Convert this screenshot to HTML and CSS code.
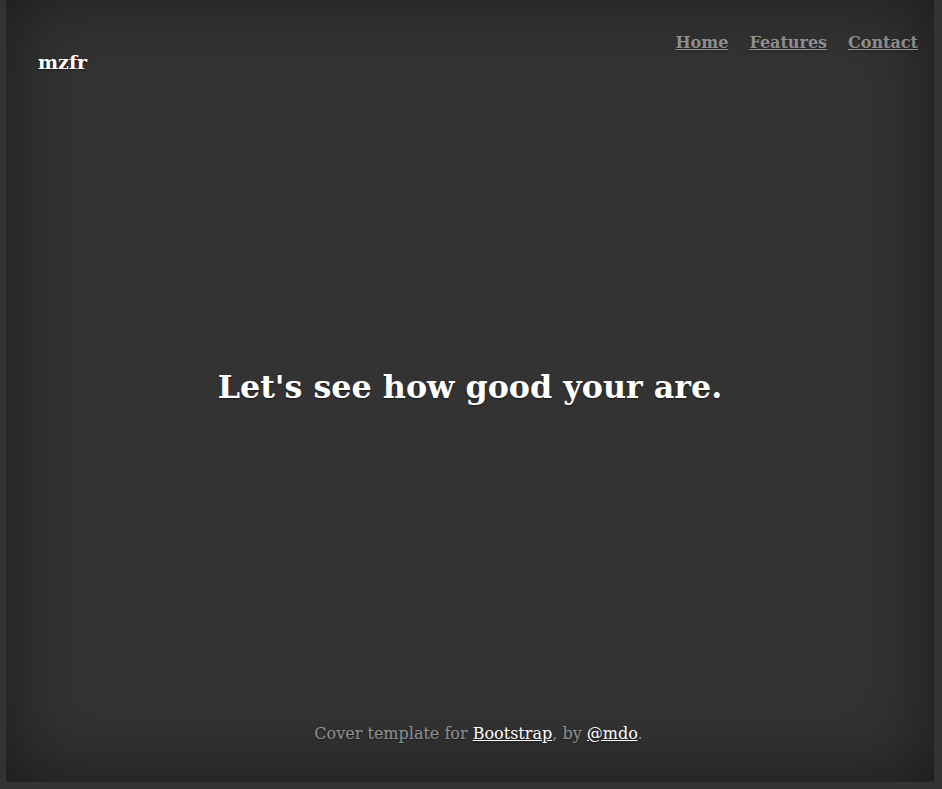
FILE: index.html
```html
<!DOCTYPE html>
<html lang="en">
<head>
<meta charset="utf-8">
<title>mzfr</title>
<link rel="stylesheet" href="styles.css">
</head>
<body>
<div class="cover">
  <header class="masthead">
    <h3 class="brand">mzfr</h3>
    <nav class="nav">
      <a href="#" class="nav-link">Home</a>
      <a href="#" class="nav-link">Features</a>
      <a href="#" class="nav-link">Contact</a>
    </nav>
  </header>
  <main class="inner">
    <h1 class="cover-heading">Let's see how good your are.</h1>
  </main>
  <footer class="mastfoot">
    <p>Cover template for <a href="#">Bootstrap</a>, by <a href="#">@mdo</a>.</p>
  </footer>
</div>
</body>
</html>
```
FILE: styles.css
```css
html, body {
  margin: 0;
  height: 100%;
  background-color: #333;
  overflow: hidden;
}
body {
  font-family: "DejaVu Serif", serif;
  color: #fff;
  text-shadow: 0 .05rem .1rem rgba(0,0,0,.5);
}
.cover {
  margin: -8px 8px 0 6px;
  height: 790px;
  box-sizing: border-box;
  padding: 38px 16px 35px 32px;
  display: flex;
  flex-direction: column;
  box-shadow: inset 0 0 5rem rgba(0,0,0,.5);
  border-bottom: 1px solid #262626;
}
.masthead {
  display: flex;
  justify-content: space-between;
  align-items: flex-start;
}
.brand {
  margin: 20px 0 0 0;
  font-size: 19px;
  line-height: 24px;
  font-weight: bold;
}
.nav {
  display: flex;
  gap: 21px;
  margin-top: 1px;
}
.nav-link {
  font-size: 16px;
  line-height: 24px;
  font-weight: bold;
  color: rgba(255,255,255,.5);
  text-decoration: underline;
}
.inner {
  flex: 1;
  display: flex;
  align-items: center;
  justify-content: center;
  margin-left: -16px;
  padding-bottom: 21px;
}
.cover-heading {
  margin: 0;
  font-size: 31.75px;
  font-weight: bold;
  line-height: 1.2;
}
.mastfoot {
  text-align: center;
  color: rgba(255,255,255,.5);
  font-size: 16px;
  line-height: 24px;
  padding-left: 1px;
}
.mastfoot p { margin: 0; }
.mastfoot a { color: #fff; text-decoration: underline; }
```
